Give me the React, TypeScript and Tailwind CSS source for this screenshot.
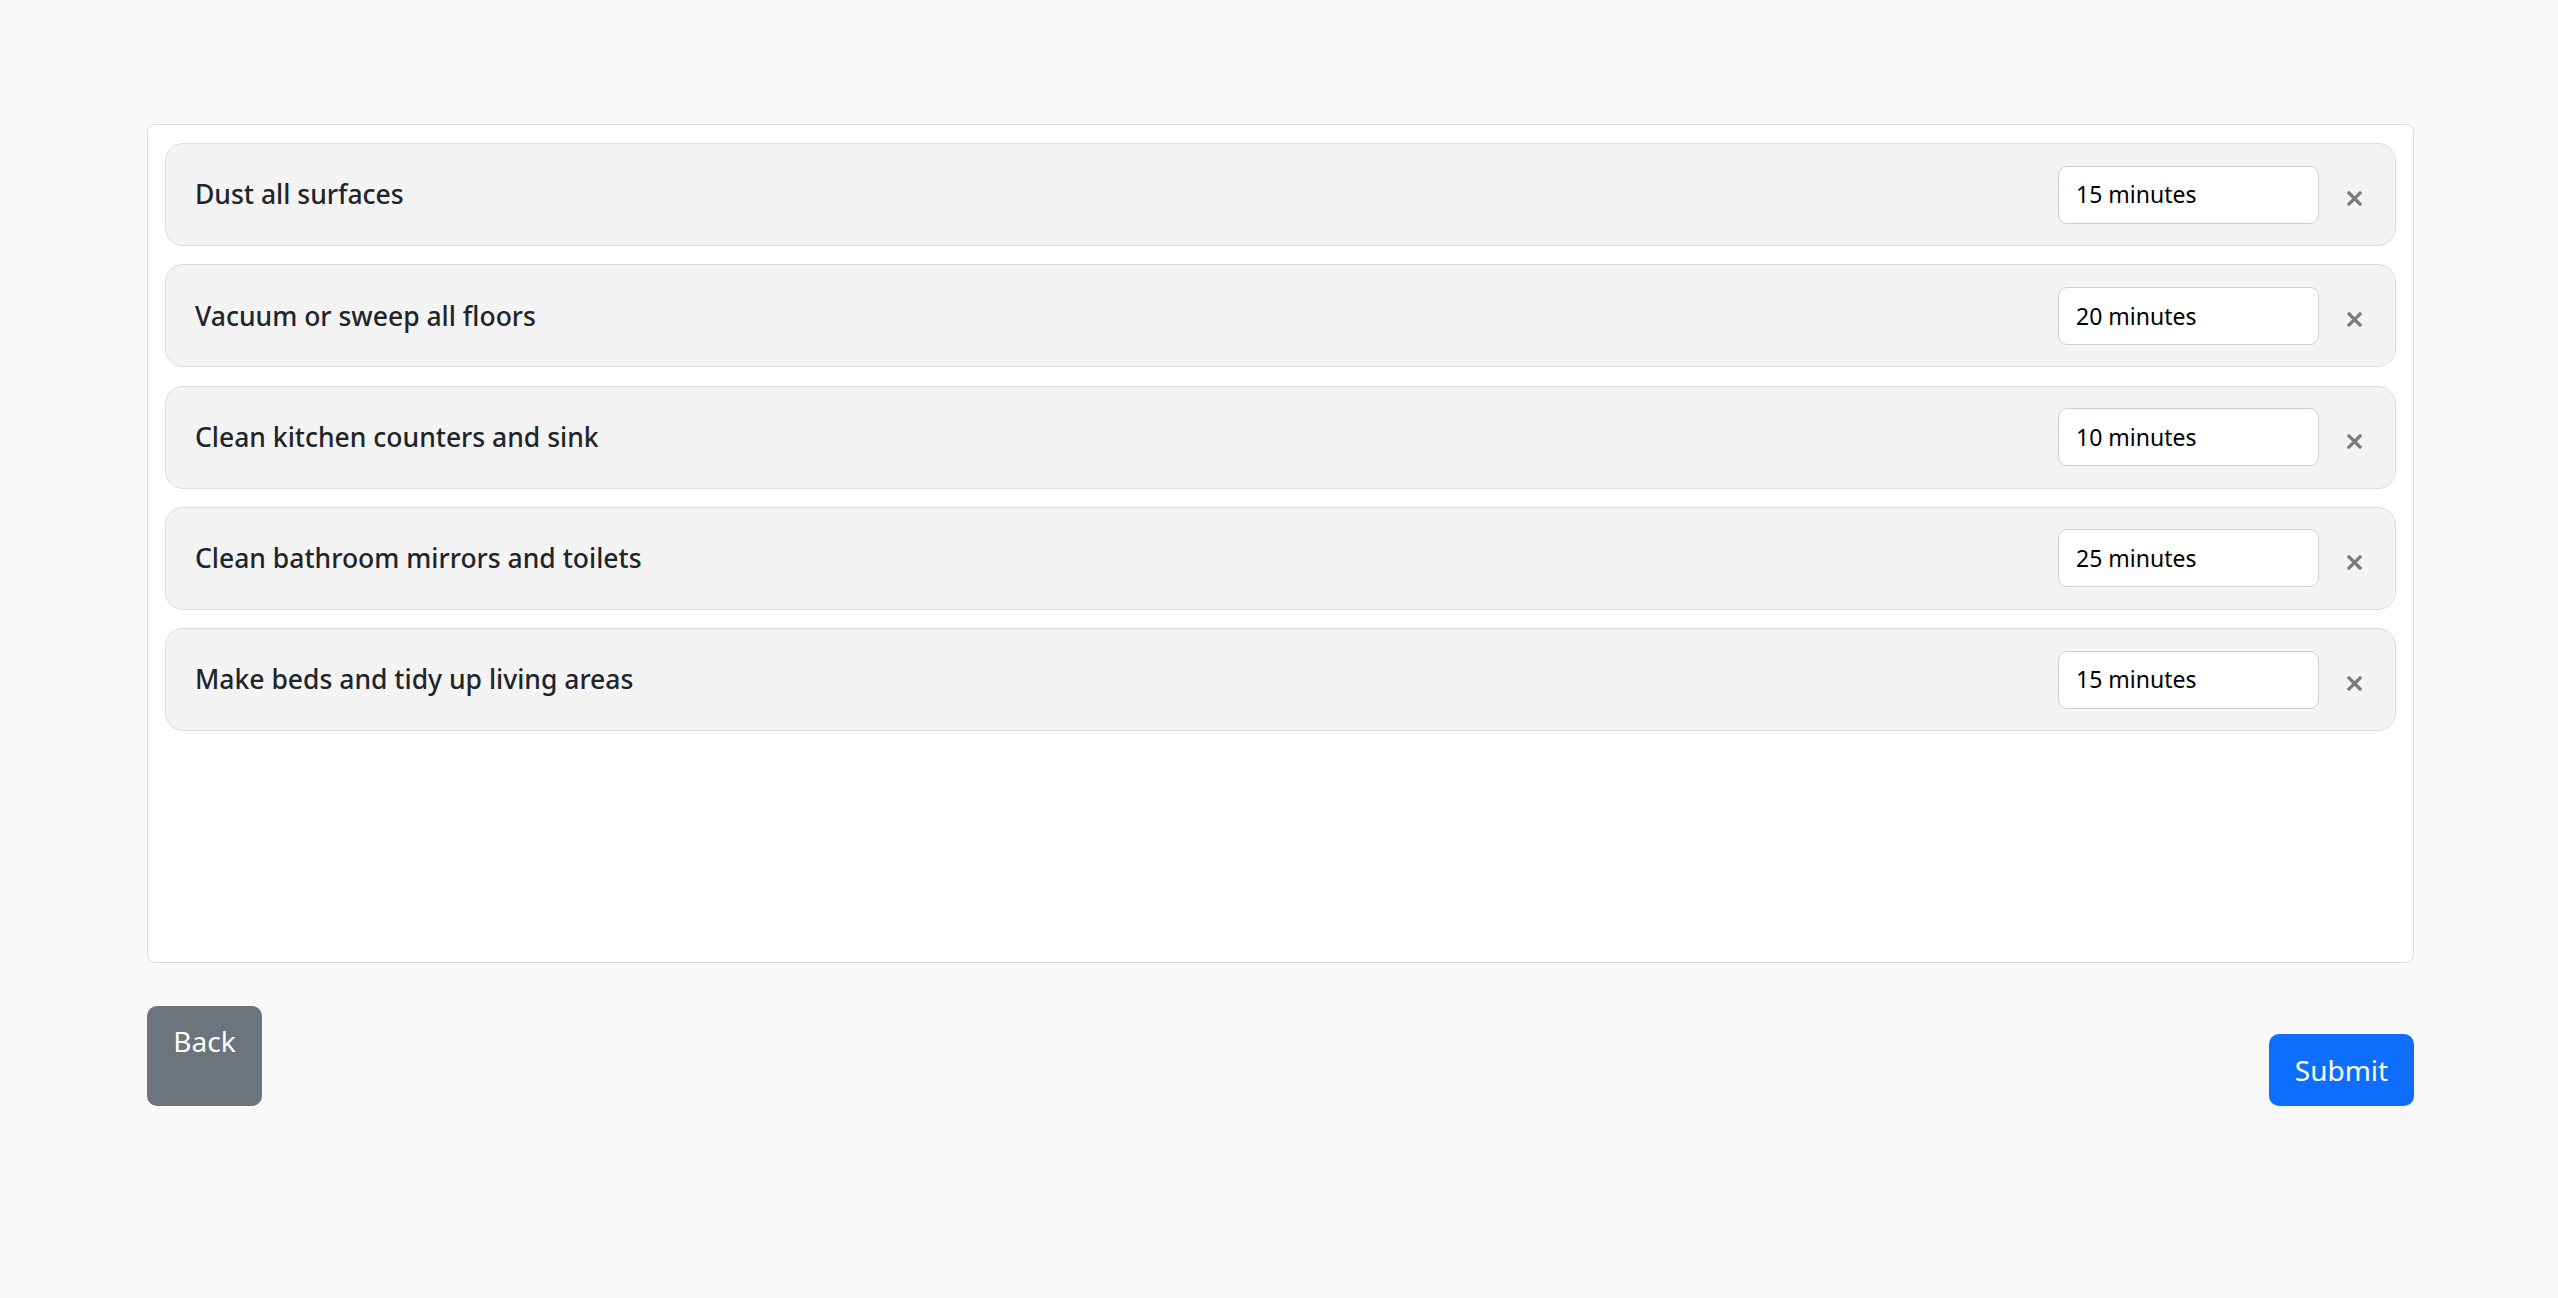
import React from "react";

const tasks = [
  { name: "Dust all surfaces", time: "15 minutes" },
  { name: "Vacuum or sweep all floors", time: "20 minutes" },
  { name: "Clean kitchen counters and sink", time: "10 minutes" },
  { name: "Clean bathroom mirrors and toilets", time: "25 minutes" },
  { name: "Make beds and tidy up living areas", time: "15 minutes" },
];

function CloseIcon() {
  return (
    <svg width="17" height="15" viewBox="0 0 17 15" fill="none">
      <path d="M3 2 L14 13 M14 2 L3 13" stroke="#7b7b7b" strokeWidth="3.2" strokeLinecap="square" />
    </svg>
  );
}

export default function App() {
  return (
    <div
      className="min-h-[1298px] w-full bg-[#f9f9f9] text-[#212529]"
      style={{ fontFamily: '"Noto Sans", "Open Sans", sans-serif' }}
    >
      <div className="pl-[147px] pt-[124px] w-[2414px]">
        <div className="h-[839px] rounded-[8px] border border-[#dcdcdc] bg-white px-[17px] pt-[18px]">
          <div className="flex flex-col gap-[18.25px]">
            {tasks.map((t) => (
              <div
                key={t.name}
                className="flex h-[103px] items-center rounded-[18px] border border-[#dddddd] bg-[#f4f4f4] pl-[29px] pr-[32px]"
              >
                <div className="flex-1 text-[26.5px] font-medium leading-none">{t.name}</div>
                <div className="flex h-[58px] w-[261px] items-center rounded-[9px] border border-[#cfcfcf] bg-white pl-[17px] text-[23px] text-black">
                  {t.time}
                </div>
                <div className="ml-[27px] mt-[8px] flex items-center">
                  <CloseIcon />
                </div>
              </div>
            ))}
          </div>
        </div>
        <div className="mt-[43px] flex items-end justify-between">
          <button className="flex h-[100px] w-[115px] items-start justify-center self-start rounded-[10px] bg-[#6c757d] pt-[21px] text-[28px] leading-none text-white">
            Back
          </button>
          <button className="flex h-[72px] w-[145px] items-center justify-center rounded-[10px] bg-[#0d6efd] text-[28px] text-white">
            Submit
          </button>
        </div>
      </div>
    </div>
  );
}
